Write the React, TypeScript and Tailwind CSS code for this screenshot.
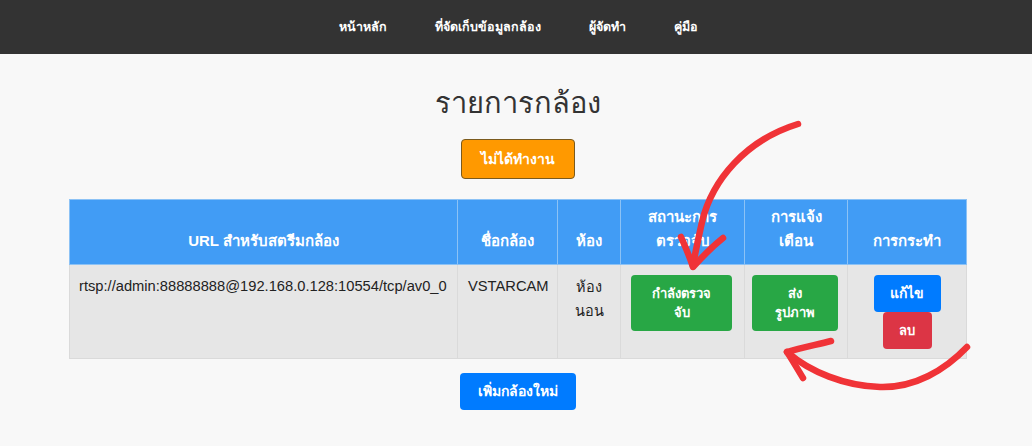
import React from 'react';

const navLinks = ['หน้าหลัก', 'ที่จัดเก็บข้อมูลกล้อง', 'ผู้จัดทำ', 'คู่มือ'];

function Annotations() {
  return (
    <svg
      className="pointer-events-none absolute left-0 top-0"
      width="1032"
      height="446"
      viewBox="0 0 1032 446"
      fill="none"
    >
      <g stroke="#f03337" strokeLinecap="round" strokeLinejoin="round">
        <path d="M798 124 C746 140 712 180 702 222 C697 245 694 258 693 266" strokeWidth="6.5" />
        <path d="M681 237 C686 248 690 258 693 267 C703 256 713 246 723 238" strokeWidth="6.5" />
        <path d="M967 347 C945 370 915 388 880 387 C845 386 810 372 787 352" strokeWidth="6.5" />
        <path d="M831 341 C815 345 800 348 787 352 C793 361 798 370 803 378" strokeWidth="6.5" />
      </g>
    </svg>
  );
}

export default function App() {
  return (
    <div
      className="relative min-h-[446px] w-full bg-[#f8f8f8] text-[#333]"
      style={{ fontFamily: '"Liberation Sans", "DejaVu Sans", "Noto Sans", sans-serif' }}
    >
      <nav className="flex h-[54px] items-center justify-center bg-[#333333] pl-[4px]">
        {navLinks.map((l) => (
          <span key={l} className="px-6 text-[12.5px] font-bold text-white">
            {l}
          </span>
        ))}
      </nav>

      <div className="flex flex-col items-center pl-[4px]">
        <h1 className="mt-[31px] text-[29px] leading-[36px] text-[#333]">รายการกล้อง</h1>
        <button className="mt-[18px] h-[40px] w-[114px] rounded border border-[#7a5a1e] bg-[#ff9900] text-[14px] font-bold text-white">
          ไม่ได้ทำงาน
        </button>

        <table className="mt-[20px] w-[897px] table-fixed border-collapse border border-[#dddddd] text-[15px]">
          <colgroup>
            <col className="w-[388px]" />
            <col className="w-[100px]" />
            <col className="w-[63px]" />
            <col className="w-[124px]" />
            <col className="w-[103px]" />
            <col className="w-[119px]" />
          </colgroup>
          <thead>
            <tr className="h-[65px] bg-[#419cf5] text-white">
              <th className="border border-[#8cc2f5] px-[10px] pb-[11px] align-bottom font-bold leading-[24px]">
                URL สำหรับสตรีมกล้อง
              </th>
              <th className="border border-[#8cc2f5] px-[10px] pb-[11px] align-bottom font-bold leading-[24px]">
                ชื่อกล้อง
              </th>
              <th className="border border-[#8cc2f5] px-[6px] pb-[11px] align-bottom font-bold leading-[24px]">
                ห้อง
              </th>
              <th className="border border-[#8cc2f5] px-[6px] pb-[11px] align-bottom font-bold leading-[24px]">
                สถานะการ
                <br />
                ตรวจจับ
              </th>
              <th className="border border-[#8cc2f5] px-[6px] pb-[11px] align-bottom font-bold leading-[24px]">
                การแจ้ง
                <br />
                เตือน
              </th>
              <th className="border border-[#8cc2f5] px-[6px] pb-[11px] align-bottom font-bold leading-[24px]">
                การกระทำ
              </th>
            </tr>
          </thead>
          <tbody>
            <tr className="h-[94px] bg-[#e6e6e6] text-[#222]">
              <td className="border border-[#dadada] pl-[9px] pr-[10px] pt-[10px] align-top text-[14.7px] leading-[22px]">
                rtsp://admin:88888888@192.168.0.128:10554/tcp/av0_0
              </td>
              <td className="border border-[#dadada] px-[10px] pt-[10px] align-top text-center text-[14.7px] leading-[22px]">
                VSTARCAM
              </td>
              <td className="border border-[#dadada] px-[6px] pt-[10px] align-top text-center text-[14.5px] leading-[24px]">
                ห้อง
                <br />
                นอน
              </td>
              <td className="border border-[#dadada] pl-[10px] pt-[10px] align-top">
                <div className="flex">
                  <button className="h-[56px] w-[101px] rounded bg-[#28a745] text-[13px] font-bold leading-[19px] text-white">
                    กำลังตรวจ
                    <br />
                    จับ
                  </button>
                </div>
              </td>
              <td className="border border-[#dadada] pl-[7px] pt-[10px] align-top">
                <div className="flex">
                  <button className="h-[56px] w-[86px] rounded bg-[#28a745] text-[13px] font-bold leading-[19px] text-white">
                    ส่ง
                    <br />
                    รูปภาพ
                  </button>
                </div>
              </td>
              <td className="border border-[#dadada] pt-[10px] align-top">
                <div className="flex flex-col items-center">
                  <button className="h-[37px] w-[67px] rounded bg-[#007bff] text-[14px] font-bold text-white">
                    แก้ไข
                  </button>
                  <button className="h-[37px] w-[49px] rounded bg-[#dc3545] text-[13px] font-bold text-white">
                    ลบ
                  </button>
                </div>
              </td>
            </tr>
          </tbody>
        </table>

        <button className="mt-[14px] h-[37px] w-[116px] rounded bg-[#007bff] text-[14px] font-bold text-white">
          เพิ่มกล้องใหม่
        </button>
      </div>

      <Annotations />
    </div>
  );
}
